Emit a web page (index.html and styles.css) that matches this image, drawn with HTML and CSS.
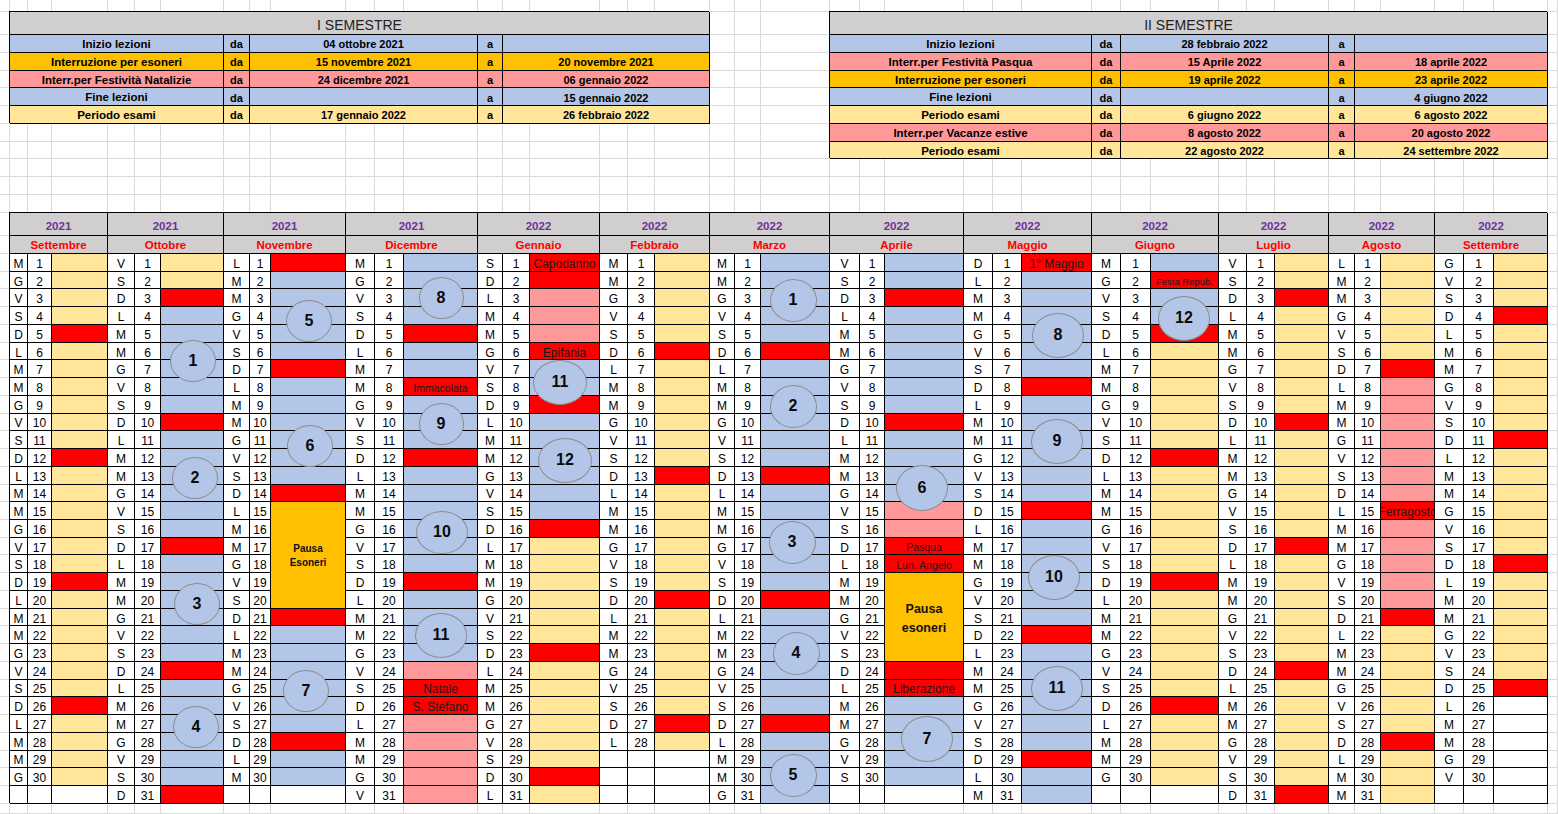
FILE: index.html
```html
<!DOCTYPE html>
<html lang="it">
<head>
<meta charset="utf-8">
<title>Calendario accademico 2021/2022</title>
<link rel="stylesheet" href="styles.css">
</head>
<body>
<div class="sheet" id="sheet"></div>
<script src="script.js"></script>
</body>
</html>
```

FILE: styles.css
```css
html, body {
  margin: 0;
  padding: 0;
  background: #fff;
  overflow: hidden;
}
body {
  font-family: "Liberation Sans", Arial, "DejaVu Sans", sans-serif;
  color: #000;
}
.sheet {
  position: relative;
  display: grid;
  width: 1558px;
  height: 814px;
  grid-template-columns:
    10px
    18px 24px 56px
    27px 26px 63px
    26px 21px 75px
    29px 29px 74px
    25px 27px 70px
    28px 27px 55px
    25px 26px 69px
    30px 25px 79px
    29px 29px 70px
    29px 30px 68px
    28px 28px 54px
    26px 26px 54px
    29px 30px 54px
    10px;
  grid-template-rows: 12px 23px repeat(10, 17.75px) 23.5px 18px repeat(31, 17.74px) 10px;
}
.f {
  box-sizing: border-box;
  border-right: 1px solid #dadada;
  border-bottom: 1px solid #dadada;
}
.c {
  box-sizing: border-box;
  border-right: 1px solid #000;
  border-bottom: 1px solid #000;
  box-shadow: -1px -1px 0 #000;
  display: flex;
  align-items: center;
  justify-content: center;
  overflow: hidden;
  white-space: nowrap;
  background: #fff;
  font-size: 12px;
  line-height: 1;
  min-width: 0;
  min-height: 0;
  padding-top: 3px;
}
.sem-h {
  background: #d0cece;
  font-size: 14px;
  color: #222;
  padding-top: 4px;
}
.t {
  font-weight: bold;
  font-size: 11px;
}
.t.lbl {
  font-size: 11.5px;
}
.yr {
  background: #d0cece;
  color: #7030a0;
  font-weight: bold;
  font-size: 11.5px;
  padding-top: 5px;
}
.mo {
  background: #d0cece;
  color: #ff0000;
  font-weight: bold;
  font-size: 11.5px;
  padding-top: 2px;
}
.dl, .dn {
  font-size: 12px;
}
.bl { background: #b4c6e7; }
.ye { background: #ffe699; }
.re { background: #ff0000; }
.pk { background: #ff9999; }
.or { background: #ffc000; }
.wh { background: #fff; }
.lb {
  font-size: 12px;
  color: #1a1a1a;
}
.s10 { font-size: 10.5px; }
.s9 { font-size: 9.5px; }
.mg {
  white-space: pre;
  text-align: center;
  font-weight: bold;
  line-height: 1.45;
  color: #111;
}
.lb-n { font-size: 10px; }
.lb-a { font-size: 12.5px; }
.circ {
  position: absolute;
  box-sizing: border-box;
  border-radius: 50%;
  background: #b4c6e7;
  border: 1px solid #8c8c8c;
  display: flex;
  align-items: center;
  justify-content: center;
  font-weight: bold;
  font-size: 16px;
  color: #0a0a0a;
  z-index: 2;
}
```

FILE: script.js
```js
(function () {
  var sheet = document.getElementById('sheet');
  var NR = 46, NC = 41;
  var occ = [];
  for (var r = 0; r <= NR; r++) {
    occ.push([]);
    for (var c = 0; c <= NC; c++) occ[r].push(false);
  }
  var items = [];
  function cell(r1, r2, c1, c2, cls, text) {
    var d = document.createElement('div');
    d.className = 'c ' + cls;
    d.style.gridRow = r1 + ' / ' + r2;
    d.style.gridColumn = c1 + ' / ' + c2;
    if (text) {
      var s = document.createElement('span');
      s.textContent = text;
      d.appendChild(s);
    }
    for (var rr = r1; rr < r2; rr++)
      for (var cc = c1; cc < c2; cc++) occ[rr][cc] = true;
    items.push(d);
    return d;
  }

  /* semester tables */
  var SEM = [
    {
      cols: [[2, 8], [8, 9], [9, 14], [14, 15], [15, 20]],
      title: 'I SEMESTRE',
      rows: [
        ['bl', 'Inizio lezioni', '04 ottobre 2021', ''],
        ['or', 'Interruzione per esoneri', '15 novembre 2021', '20 novembre 2021'],
        ['pk', 'Interr.per Festività Natalizie', '24 dicembre 2021', '06 gennaio 2022'],
        ['bl', 'Fine lezioni', '', '15 gennaio 2022'],
        ['ye', 'Periodo esami', '17 gennaio 2022', '26 febbraio 2022']
      ]
    },
    {
      cols: [[23, 29], [29, 30], [30, 35], [35, 36], [36, 41]],
      title: 'II SEMESTRE',
      rows: [
        ['bl', 'Inizio lezioni', '28 febbraio 2022', ''],
        ['pk', 'Interr.per Festività Pasqua', '15 Aprile 2022', '18 aprile 2022'],
        ['or', 'Interruzione per esoneri', '19 aprile 2022', '23 aprile 2022'],
        ['bl', 'Fine lezioni', '', '4 giugno 2022'],
        ['ye', 'Periodo esami', '6 giugno 2022', '6 agosto 2022'],
        ['pk', 'Interr.per Vacanze estive', '8 agosto 2022', '20 agosto 2022'],
        ['ye', 'Periodo esami', '22  agosto 2022', '24 settembre 2022']
      ]
    }
  ];
  SEM.forEach(function (t) {
    var k = t.cols;
    cell(2, 3, k[0][0], k[4][1], 'sem-h', t.title);
    t.rows.forEach(function (row, i) {
      var r = 3 + i;
      var cls = 't ' + row[0];
      var vals = [row[1], 'da', row[2], 'a', row[3]];
      for (var j = 0; j < 5; j++) cell(r, r + 1, k[j][0], k[j][1], cls + (j === 0 ? ' lbl' : ''), vals[j]);
    });
  });

  /* calendar */
  var DOW = ['L', 'M', 'M', 'G', 'V', 'S', 'D'];
  var MONTHS = [
    { y: '2021', n: 'Settembre', s: 2, days: 30, seg: [[1, 30, 'ye', 1]] },
    { y: '2021', n: 'Ottobre', s: 4, days: 31, seg: [[1, 2, 'ye', 1], [3, 31, 'bl', 1]] },
    { y: '2021', n: 'Novembre', s: 0, days: 30, seg: [[1, 30, 'bl', 1]], ov: { 1: ['re'] },
      mg: [15, 20, 'or lb-n', 'Pausa\nEsoneri'] },
    { y: '2021', n: 'Dicembre', s: 2, days: 31, seg: [[1, 23, 'bl', 1], [24, 31, 'pk', 1]],
      ov: { 8: ['re', 'Immacolata', 's10'], 25: ['re', 'Natale'], 26: ['re', 'S. Stefano'] } },
    { y: '2022', n: 'Gennaio', s: 5, days: 31, seg: [[1, 5, 'pk', 1], [6, 15, 'bl', 1], [16, 31, 'ye', 1]],
      ov: { 1: ['re', 'Capodanno'], 6: ['re', 'Epifania'] } },
    { y: '2022', n: 'Febbraio', s: 1, days: 28, seg: [[1, 28, 'ye', 1]] },
    { y: '2022', n: 'Marzo', s: 1, days: 31, seg: [[1, 31, 'bl', 1]] },
    { y: '2022', n: 'Aprile', s: 4, days: 30, seg: [[1, 14, 'bl', 1], [15, 18, 'pk', 1], [24, 30, 'bl', 1]],
      ov: { 17: ['re', 'Pasqua', 's10'], 18: ['re', 'Lun. Angelo', 's10'], 25: ['re', 'Liberazione'] },
      mg: [19, 23, 'or lb-a', 'Pausa\nesoneri'] },
    { y: '2022', n: 'Maggio', s: 6, days: 31, seg: [[1, 31, 'bl', 1]], ov: { 1: ['re', '1° Maggio'] } },
    { y: '2022', n: 'Giugno', s: 2, days: 30, seg: [[1, 4, 'bl', 1], [5, 30, 'ye', 1]],
      ov: { 2: ['re', 'Festa Repub.', 's9'] } },
    { y: '2022', n: 'Luglio', s: 4, days: 31, seg: [[1, 31, 'ye', 1]] },
    { y: '2022', n: 'Agosto', s: 0, days: 31, seg: [[1, 7, 'ye', 1], [8, 20, 'pk', 0], [21, 31, 'ye', 1]],
      ov: { 15: ['re', 'Ferragosto'] } },
    { y: '2022', n: 'Settembre', s: 3, days: 30, seg: [[1, 25, 'ye', 1], [26, 30, 'wh', 0]] }
  ];

  MONTHS.forEach(function (m, i) {
    var cL = 2 + 3 * i, cN = cL + 1, cC = cL + 2;
    cell(13, 14, cL, cL + 3, 'yr', m.y);
    cell(14, 15, cL, cL + 3, 'mo', m.n);
    for (var d = 1; d <= 31; d++) {
      var r = 14 + d;
      if (d > m.days) {
        cell(r, r + 1, cL, cL + 1, 'dl', '');
        cell(r, r + 1, cN, cN + 1, 'dn', '');
        cell(r, r + 1, cC, cC + 1, 'wh', '');
        continue;
      }
      var dow = (m.s + d - 1) % 7;
      cell(r, r + 1, cL, cL + 1, 'dl', DOW[dow]);
      cell(r, r + 1, cN, cN + 1, 'dn', String(d));
      if (m.mg && d >= m.mg[0] && d <= m.mg[1]) {
        if (d === m.mg[0]) cell(r, r + m.mg[1] - m.mg[0] + 1, cC, cC + 1, 'mg ' + m.mg[2], m.mg[3]);
        continue;
      }
      var col = 'wh', sun = 0;
      m.seg.forEach(function (s) {
        if (d >= s[0] && d <= s[1]) { col = s[2]; sun = s[3]; }
      });
      if (dow === 6 && sun) col = 're';
      var txt = '', extra = '';
      if (m.ov && m.ov[d]) {
        col = m.ov[d][0];
        txt = m.ov[d][1] || '';
        extra = m.ov[d][2] || '';
      }
      cell(r, r + 1, cC, cC + 1, col + (txt ? ' lb ' + extra : ''), txt);
    }
  });

  var frag = document.createDocumentFragment();
  for (var fr = 1; fr <= NR; fr++) {
    for (var fc = 1; fc <= NC; fc++) {
      if (!occ[fr][fc]) {
        var f = document.createElement('div');
        f.className = 'f';
        f.style.gridRow = fr;
        f.style.gridColumn = fc;
        frag.appendChild(f);
      }
    }
  }
  items.forEach(function (d) { frag.appendChild(d); });

  /* week counters: [number, centre x, centre y, width, height] */
  var CIRC = [
    [1, 193, 361, 46, 42], [2, 195, 478, 46, 42], [3, 197, 604, 46, 42], [4, 196, 727, 46, 42],
    [5, 309, 321, 46, 42], [6, 310, 446, 46, 42], [7, 306, 691, 46, 42],
    [8, 441, 298, 45, 42], [9, 441, 424, 45, 42], [10, 442, 532, 52, 43], [11, 441, 635, 52, 45],
    [11, 560, 382, 54, 45], [12, 565, 460, 54, 45],
    [1, 793, 300, 47, 43], [2, 793, 406, 47, 43], [3, 792, 542, 47, 43], [4, 796, 653, 47, 43], [5, 793, 775, 47, 43],
    [6, 922, 488, 52, 46], [7, 927, 739, 52, 46],
    [8, 1058, 335, 52, 45], [9, 1057, 441, 52, 45], [10, 1054, 577, 52, 45], [11, 1057, 688, 52, 45],
    [12, 1184, 318, 52, 45]
  ];
  CIRC.forEach(function (c) {
    var e = document.createElement('div');
    e.className = 'circ';
    e.textContent = c[0];
    e.style.left = (c[1] - c[3] / 2) + 'px';
    e.style.top = (c[2] - c[4] / 2) + 'px';
    e.style.width = c[3] + 'px';
    e.style.height = c[4] + 'px';
    frag.appendChild(e);
  });

  sheet.appendChild(frag);
})();
```
